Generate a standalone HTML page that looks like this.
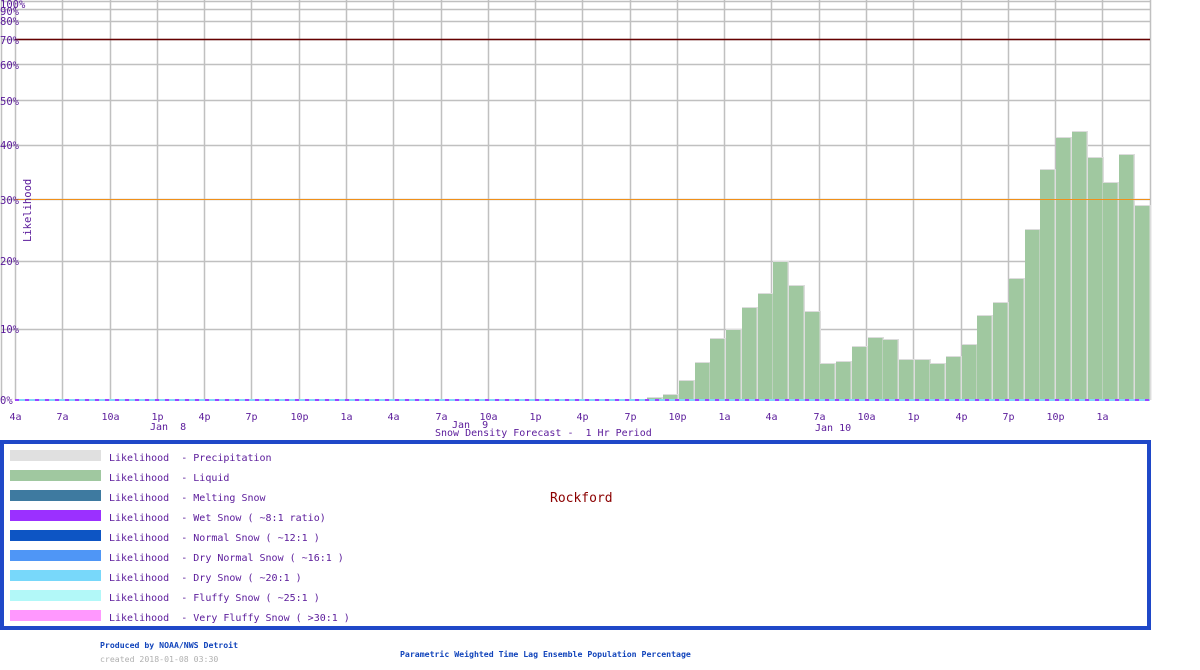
<!DOCTYPE html>
<html><head><meta charset="utf-8"><style>
html,body{margin:0;padding:0;background:#fff;width:1200px;height:670px;overflow:hidden}
svg text{font-family:"DejaVu Sans Mono","Liberation Mono",monospace;white-space:pre}
</style></head><body>
<svg id="s" width="1200" height="670" xmlns="http://www.w3.org/2000/svg">
<g id="grid" stroke="#c0c0c0" stroke-width="1.5"></g>
<g id="bars"></g>
<line x1="15" y1="39.5" x2="1150" y2="39.5" stroke="#600" stroke-width="1.5"/>
<line x1="15" y1="199.5" x2="1150" y2="199.5" stroke="#f0901a" stroke-width="1"/>
<line x1="15" y1="400" x2="1150" y2="400" stroke="#80d8f8" stroke-width="2"/>
<line x1="15" y1="400" x2="1150" y2="400" stroke="#a040ff" stroke-width="2" stroke-dasharray="4 6"/>
<g fill="#5a1a9a" font-size="10.5">
<text x="0" y="8">100%</text><text x="0" y="15">90%</text><text x="0" y="25">80%</text>
<text x="0" y="44">70%</text><text x="0" y="69">60%</text><text x="0" y="105">50%</text>
<text x="0" y="149">40%</text><text x="0" y="204">30%</text><text x="0" y="265">20%</text>
<text x="0" y="333">10%</text><text x="0" y="404">0%</text>
<text transform="translate(31,242) rotate(-90)" font-size="10.5">Likelihood</text>
</g>
<g id="xl" fill="#5a1a9a" font-size="10" text-anchor="middle"></g>
<g fill="#5a1a9a" font-size="10">
<text x="150" y="430">Jan  8</text><text x="452" y="428">Jan  9</text><text x="815" y="431">Jan 10</text>
<text x="435" y="436">Snow Density Forecast -  1 Hr Period</text>
</g>
<rect x="2" y="442" width="1147" height="186" fill="none" stroke="#1f48c8" stroke-width="4"/>
<text x="550" y="502" fill="#8b0000" font-size="13">Rockford</text>
<g id="lg" font-size="10" fill="#5a1a9a"></g>
<text x="100" y="648" fill="#1144bb" font-size="8.2" font-weight="bold">Produced by NOAA/NWS Detroit</text>
<text x="100" y="662" fill="#b0b0b0" font-size="8.2">created 2018-01-08 03:30</text>
<text x="400" y="657" fill="#1144bb" font-size="8.2" font-weight="bold">Parametric Weighted Time Lag Ensemble Population Percentage</text>
</svg>
<script>
var NS="http://www.w3.org/2000/svg";
function el(p,t,a,txt){var e=document.createElementNS(NS,t);for(var k in a)e.setAttribute(k,a[k]);if(txt!==undefined)e.textContent=txt;document.getElementById(p).appendChild(e);}
var ys=[1,9,21,39,64,100,145,199,261,329];
ys.forEach(function(y){el('grid','line',{x1:1,x2:1150,y1:y+.5,y2:y+.5});});
el('grid','line',{x1:1.5,x2:1.5,y1:0,y2:400});
var lab=["4a","7a","10a","1p","4p","7p","10p","1a","4a","7a","10a","1p","4p","7p","10p","1a","4a","7a","10a","1p","4p","7p","10p","1a"];
for(var i=0;i<25;i++){var x=Math.round(15+i*47.28)+.5;el('grid','line',{x1:x,x2:x,y1:0,y2:400});
 if(i<24)el('xl','text',{x:x,y:420},lab[i]);}
var tops=[[647,398],[663,395],[679,381],[695,363],[710,339],[726,330],[742,308],[758,294],[773,262],[789,286],[805,312],[820,364],[836,362],[852,347],[868,338],[883,340],[899,360],[915,360],[930,364],[946,357],[962,345],[977,316],[993,303],[1009,279],[1025,230],[1040,170],[1056,138],[1072,132],[1088,158],[1103,183],[1119,155],[1135,206]];
tops.forEach(function(b){el('bars','rect',{x:b[0],y:b[1]-1,width:16,height:400-b[1]+1,fill:'#dcdcdc'});
 el('bars','rect',{x:b[0],y:b[1],width:14.5,height:400-b[1],fill:'#a0c8a0'});});
var L=[["#e0e0e0","Precipitation"],["#a0c8a0","Liquid"],["#3e7aa0","Melting Snow"],["#9b30ff","Wet Snow ( ~8:1 ratio)"],["#0d55c4","Normal Snow ( ~12:1 )"],["#4f96f6","Dry Normal Snow ( ~16:1 )"],["#78d8fa","Dry Snow ( ~20:1 )"],["#b2f8f8","Fluffy Snow ( ~25:1 )"],["#ff98fe","Very Fluffy Snow ( >30:1 )"]];
L.forEach(function(l,i){var y=450+i*20;el('lg','rect',{x:10,y:y,width:91,height:11,fill:l[0]});
 el('lg','text',{x:109,y:y+11},"Likelihood  - "+l[1]);});
</script>
</body></html>
